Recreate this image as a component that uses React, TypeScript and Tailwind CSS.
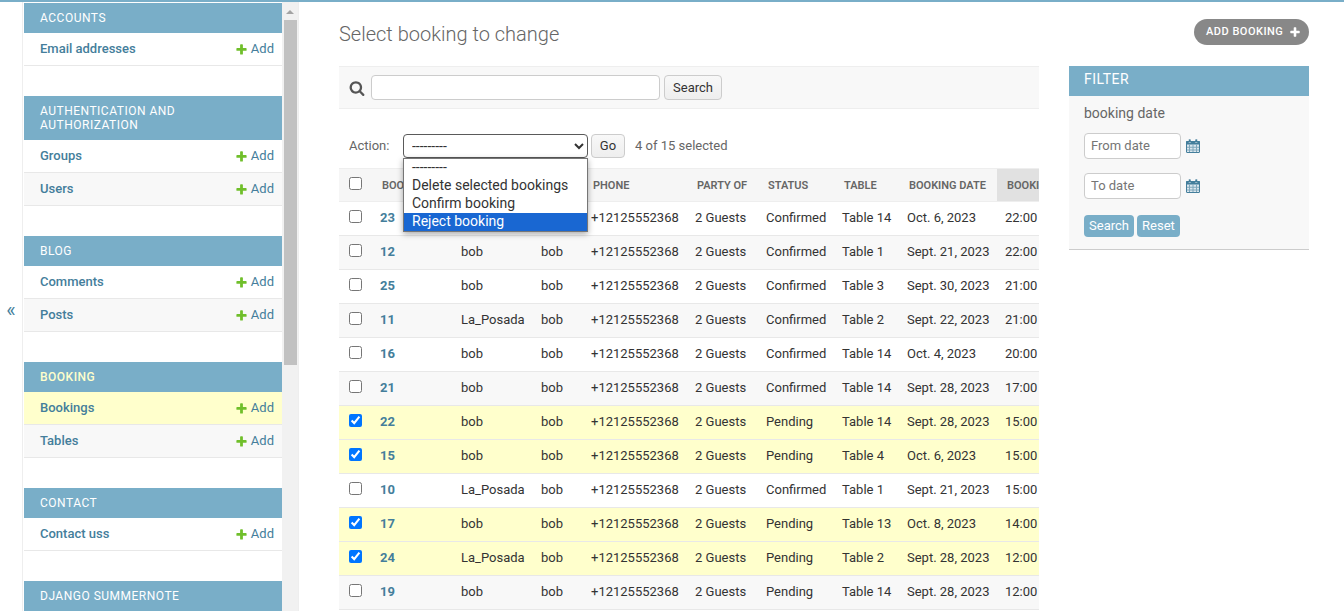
import React from "react";

const PLUS = "M1600 796v192q0 40-28 68t-68 28h-416v416q0 40-28 68t-68 28h-192q-40 0-68-28t-28-68v-416h-416q-40 0-68-28t-28-68v-192q0-40 28-68t68-28h416v-416q0-40 28-68t68-28h192q40 0 68 28t28 68v416h416q40 0 68 28t28 68z";
const SEARCH = "M1216 832q0-185-131.5-316.5t-316.5-131.5-316.5 131.5-131.5 316.5 131.5 316.5 316.5 131.5 316.5-131.5 131.5-316.5zm512 832q0 52-38 90t-90 38q-54 0-90-38l-343-342q-179 124-399 124-143 0-273.5-55.5t-225-150-150-225-55.5-273.5 55.5-273.5 150-225 225-150 273.5-55.5 273.5 55.5 225 150 150 225 55.5 273.5q0 220-124 399l343 343q37 37 37 90z";

type Model = { name: string; current?: boolean };
type Section = { title: string; current?: boolean; models: Model[] };

const sections: Section[] = [
  { title: "ACCOUNTS", models: [{ name: "Email addresses" }] },
  { title: "AUTHENTICATION AND AUTHORIZATION", models: [{ name: "Groups" }, { name: "Users" }] },
  { title: "BLOG", models: [{ name: "Comments" }, { name: "Posts" }] },
  { title: "BOOKING", current: true, models: [{ name: "Bookings", current: true }, { name: "Tables" }] },
  { title: "CONTACT", models: [{ name: "Contact uss" }] },
  { title: "DJANGO SUMMERNOTE", models: [{ name: "Attachments" }] },
];

const rows: [number, string, string, string, string, string, boolean][] = [
  [23, "bob", "Confirmed", "Table 14", "Oct. 6, 2023", "22:00", false],
  [12, "bob", "Confirmed", "Table 1", "Sept. 21, 2023", "22:00", false],
  [25, "bob", "Confirmed", "Table 3", "Sept. 30, 2023", "21:00", false],
  [11, "La_Posada", "Confirmed", "Table 2", "Sept. 22, 2023", "21:00", false],
  [16, "bob", "Confirmed", "Table 14", "Oct. 4, 2023", "20:00", false],
  [21, "bob", "Confirmed", "Table 14", "Sept. 28, 2023", "17:00", false],
  [22, "bob", "Pending", "Table 14", "Sept. 28, 2023", "15:00", true],
  [15, "bob", "Pending", "Table 4", "Oct. 6, 2023", "15:00", true],
  [10, "La_Posada", "Confirmed", "Table 1", "Sept. 21, 2023", "15:00", false],
  [17, "bob", "Pending", "Table 13", "Oct. 8, 2023", "14:00", true],
  [24, "La_Posada", "Pending", "Table 2", "Sept. 28, 2023", "12:00", true],
  [19, "bob", "Pending", "Table 14", "Sept. 28, 2023", "12:00", false],
  [18, "bob", "Pending", "Table 14", "Sept. 28, 2023", "11:00", false],
];

const colClasses = ["w-[33px]", "w-[81px]", "w-[80px]", "w-[50px]", "w-[104px]", "w-[71px]", "w-[76px]", "w-[65px]", "w-[98px]", "w-[110px]"];
const headers = ["BOOKING ID", "NAME", "USER", "PHONE", "PARTY OF", "STATUS", "TABLE", "BOOKING DATE", "BOOKING TIME"];

function Icon({ d, className }: { d: string; className: string }) {
  return (
    <svg viewBox="0 0 1792 1792" className={className} fill="currentColor" aria-hidden="true">
      <path d={d} />
    </svg>
  );
}

function CalendarIcon() {
  return (
    <svg viewBox="0 0 16 16" className="w-[16px] h-[16px]" aria-hidden="true">
      <rect x="1" y="3" width="14" height="12" rx="1" fill="#dbe7ee" />
      <path d="M1 4a1 1 0 0 1 1-1h12a1 1 0 0 1 1 1v2.5H1z" fill="#447e9b" />
      <rect x="3.5" y="1" width="2.5" height="3.5" rx="1" fill="#447e9b" stroke="#ffffff" strokeWidth="0.5" />
      <rect x="10" y="1" width="2.5" height="3.5" rx="1" fill="#447e9b" stroke="#ffffff" strokeWidth="0.5" />
      <path d="M4.5 6.5v8M8 6.5v8M11.5 6.5v8M1.5 9.25h13M1.5 12h13" stroke="#7fa6ba" strokeWidth="1" fill="none" />
      <rect x="1.5" y="3.5" width="13" height="11" rx="0.5" fill="none" stroke="#447e9b" strokeWidth="1" />
    </svg>
  );
}

function Sidebar() {
  return (
    <aside className="flex w-[299px] shrink-0 h-full border-r border-[#eeeeee] overflow-hidden">
      <div className="w-[23px] shrink-0 mr-px border-r border-[#eeeeee] flex items-center justify-center text-[20px] text-[#447e9b] pt-[7px]">«</div>
      <nav className="w-[258px] shrink-0 pt-px overflow-hidden">
        {sections.map((s) => (
          <section key={s.title} className="mb-[30px]">
            <h2 className={`bg-[#79aec8] px-4 py-2 text-[12px] leading-[14px] tracking-[0.5px] ${s.current ? "text-[#ffffcc] font-medium" : "text-white font-normal"}`}>
              {s.title}
            </h2>
            {s.models.map((m, i) => (
              <div
                key={m.name}
                className={`flex items-center justify-between h-[33px] border-b border-[#e8e8e8] pl-4 pr-2 text-[13px] text-[#447e9b] ${m.current ? "bg-[#ffffcc]" : i % 2 === 1 ? "bg-[#f8f8f8]" : "bg-white"}`}
              >
                <span className="font-medium">{m.name}</span>
                <span className="flex items-center gap-[3px]">
                  <Icon d={PLUS} className="w-[13px] h-[13px] text-[#70bf2b]" />
                  Add
                </span>
              </div>
            ))}
          </section>
        ))}
      </nav>
      <div className="w-[16px] shrink-0 bg-[#f1f1f1] flex flex-col items-center">
        <div className="h-[18px] w-full flex items-center justify-center pt-px">
          <div className="w-0 h-0 border-x-[4px] border-x-transparent border-b-[4px] border-b-[#a3a3a3]" />
        </div>
        <div className="w-[13px] h-[345px] bg-[#c1c1c1] ml-[1px]" />
      </div>
    </aside>
  );
}

function Changelist() {
  return (
    <div className="w-[700px] shrink-0 relative">
      <div className="h-[43px] bg-[#f8f8f8] border-y border-[#eeeeee] flex items-center pl-[10px]">
        <Icon d={SEARCH} className="w-[16px] h-[16px] text-[#555555] mr-[6px]" />
        <input className="w-[289px] h-[25px] bg-white border border-[#cccccc] rounded-[4px] outline-none" />
        <button className="ml-1 w-[58px] h-[25px] rounded-[4px] border border-[#cccccc] bg-gradient-to-b from-[#f8f8f8] to-[#eeeeee] text-[13px] text-[#333333]">Search</button>
      </div>
      <div className="h-[59px] flex items-end pb-[10px] text-[13px] text-[#666666] relative">
        <span className="ml-[10px] w-[54px] leading-[24px]">Action:</span>
        <select className="w-[185px] h-[24px] bg-white border border-[#5a5a5a] rounded-[4px] text-[14px] text-[#333333] pl-[4px] outline-none" defaultValue="">
          <option value="">---------</option>
        </select>
        <button className="ml-[3px] w-[34px] h-[24px] rounded-[4px] border border-[#cccccc] bg-gradient-to-b from-[#f8f8f8] to-[#eeeeee] text-[13px] text-[#333333]">Go</button>
        <span className="ml-[10px] leading-[24px]">4 of 15 selected</span>
        <div className="absolute left-[64px] top-[49px] w-[185px] h-[74px] z-10 bg-white border border-[#767676] shadow-[0_2px_6px_rgba(0,0,0,0.35)] text-[14px] text-[#333333]">
          <div className="pl-2 h-[18px] leading-[16px]">---------</div>
          <div className="pl-2 h-[18px] leading-[16px]">Delete selected bookings</div>
          <div className="pl-2 h-[18px] leading-[16px]">Confirm booking</div>
          <div className="pl-2 h-[18px] leading-[16px] bg-[#1967d2] text-white">Reject booking</div>
        </div>
      </div>
      <div className="overflow-hidden">
        <table className="table-fixed border-collapse w-[768px] text-[13px] text-[#333333]">
          <colgroup>
            {colClasses.map((c) => (
              <col key={c} className={c} />
            ))}
          </colgroup>
          <thead>
            <tr className="h-[33px] bg-[#f6f6f6] border-y border-[#eeeeee]">
              <th className="pl-[10px] pb-[3px] text-left align-middle font-normal">
                <input type="checkbox" readOnly className="block" />
              </th>
              {headers.map((h, i) => (
                <th key={h} className={`px-[10px] pt-[2px] text-left text-[11px] font-semibold text-[#666666] whitespace-nowrap overflow-hidden ${i === 8 ? "bg-[#e1e1e1]" : ""}`}>
                  {h}
                </th>
              ))}
            </tr>
          </thead>
          <tbody>
            {rows.map(([id, name, status, table, date, time, sel], i) => (
              <tr key={id} className={`h-[34px] border-b border-[#e8e8e8] ${sel ? "bg-[#ffffcc]" : i % 2 === 1 ? "bg-[#f8f8f8]" : "bg-white"}`}>
                <td className="pl-[10px] pb-[5px]">
                  <input type="checkbox" checked={sel} readOnly className="block" />
                </td>
                <td className="px-2 pb-[2px] font-bold text-[#447e9b]">{id}</td>
                <td className="px-2 pb-[2px]">{name}</td>
                <td className="px-2 pb-[2px]">bob</td>
                <td className="px-2 pb-[2px] whitespace-nowrap">+12125552368</td>
                <td className="px-2 pb-[2px] whitespace-nowrap">2 Guests</td>
                <td className="px-2 pb-[2px]">{status}</td>
                <td className="px-2 pb-[2px] whitespace-nowrap">{table}</td>
                <td className="px-2 pb-[2px] whitespace-nowrap">{date}</td>
                <td className="px-2 pb-[2px]">{time}</td>
              </tr>
            ))}
          </tbody>
        </table>
      </div>
    </div>
  );
}

function DateField({ placeholder }: { placeholder: string }) {
  return (
    <div className="flex items-center gap-[4px] mb-[14px]">
      <input placeholder={placeholder} className="w-[97px] h-[26px] bg-white border border-[#cccccc] rounded-[4px] px-[6px] pb-[2px] text-[13px] text-[#333333] placeholder:text-[#757575] outline-none" />
      <CalendarIcon />
    </div>
  );
}

function Filter() {
  return (
    <div className="w-[240px] shrink-0 h-[184px] bg-[#f8f8f8] border-b border-[#cccccc]">
      <h2 className="h-[30px] bg-[#79aec8] px-[15px] text-[14px] leading-[26px] tracking-[0.5px] text-white font-normal">FILTER</h2>
      <div className="px-[15px] pt-[8px]">
        <div className="text-[14px] leading-[18px] text-[#666666] mb-[11px]">booking date</div>
        <DateField placeholder="From date" />
        <DateField placeholder="To date" />
        <div className="flex gap-[3px] mt-[16px]">
          <button className="w-[50px] h-[22px] rounded-[4px] bg-[#79aec8] text-white text-[13px]">Search</button>
          <button className="w-[43px] h-[22px] rounded-[4px] bg-[#79aec8] text-white text-[13px]">Reset</button>
        </div>
      </div>
    </div>
  );
}

export default function App() {
  return (
    <div className="h-[611px] overflow-hidden bg-white border-t-2 border-[#79aec8] font-['Roboto',sans-serif] flex">
      <Sidebar />
      <main className="flex-1 min-w-0 pl-10 pr-[35px] flex flex-col">
        <div className="h-[64px] flex items-start justify-between shrink-0">
          <h1 className="text-[20px] font-light text-[#666666] leading-[24px] mt-[20px]">Select booking to change</h1>
          <a className="mt-[17px] h-[26px] w-[115px] rounded-[15px] bg-[#888888] text-white text-[11px] font-medium tracking-[0.5px] flex items-center pl-3 gap-[6px]">
            ADD BOOKING
            <Icon d={PLUS} className="w-[12px] h-[12px] text-white" />
          </a>
        </div>
        <div className="flex gap-[30px] items-start">
          <Changelist />
          <Filter />
        </div>
      </main>
    </div>
  );
}
